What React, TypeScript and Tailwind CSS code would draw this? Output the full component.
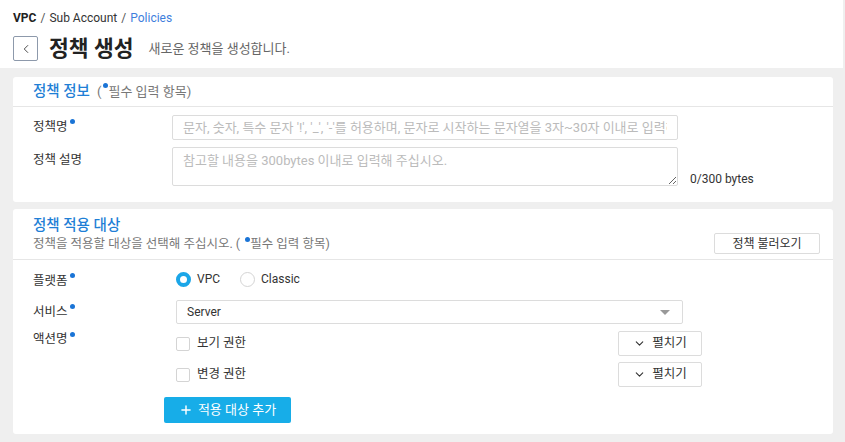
import { ChevronLeft, ChevronDown, Plus } from "lucide-react";

const font = { fontFamily: "Roboto, 'Noto Sans CJK KR', sans-serif" };

function Dot() {
  return <span className="inline-block w-[5px] h-[5px] rounded-full bg-[#1a74d6] align-top ml-[2px] mt-[1px]" />;
}

function Radio({ checked, label }: { checked?: boolean; label: string }) {
  return (
    <label className="flex items-center gap-[6px] text-[12px] text-[#333]">
      {checked ? (
        <span className="w-[15px] h-[15px] rounded-full border-[4px] border-[#1ba6e8] bg-white" />
      ) : (
        <span className="w-[15px] h-[15px] rounded-full border border-[#d4d4d4] bg-white" />
      )}
      {label}
    </label>
  );
}

function ActionRow({ label }: { label: string }) {
  return (
    <div className="flex items-center justify-between w-[526px] h-[25px]">
      <label className="flex items-center gap-[7px] text-[12.5px] text-[#333]">
        <span className="w-[14px] h-[14px] border border-[#d4d4d4] rounded-[2px] bg-white" />
        {label}
      </label>
      <button className="w-[84px] h-[25px] border border-[#dcdcdc] rounded-[2px] bg-white flex items-center justify-center gap-[6px] text-[12.5px] text-[#333]">
        <ChevronDown size={13} strokeWidth={2} className="text-[#333]" />
        펼치기
      </button>
    </div>
  );
}

export default function App() {
  return (
    <div className="w-[845px] h-[442px] bg-[#efefef] overflow-hidden" style={font}>
      {/* Header */}
      <div className="bg-white mr-[2px] px-[13px] pt-[10px] pb-[7px]">
        <div className="flex items-center text-[12px] leading-[16px] text-[#333]">
          <span className="font-bold text-[#222]">VPC</span>
          <span className="mx-[4px] text-[#555]">/</span>
          <span>Sub Account</span>
          <span className="mx-[4px] text-[#555]">/</span>
          <span className="text-[#3f7fdd]">Policies</span>
        </div>
        <div className="flex items-center mt-[10px] h-[25px]">
          <button className="w-[25px] h-[25px] border border-[#8d99ab] rounded-[2px] flex items-center justify-center">
            <ChevronLeft size={14} strokeWidth={1.5} className="text-[#333]" />
          </button>
          <h1 className="ml-[11px] text-[21.5px] font-bold text-[#222] leading-[25px]">정책 생성</h1>
          <span className="ml-[15px] text-[13px] text-[#666]">새로운 정책을 생성합니다.</span>
        </div>
      </div>

      {/* Card 1 */}
      <div className="ml-[13px] w-[820px] mt-[9px] bg-white rounded-[3px]">
        <div className="h-[30px] flex items-center px-5 border-b border-[#e6e6e6]">
          <span className="text-[14.5px] font-medium text-[#1f7fd6]">정책 정보</span>
          <span className="ml-[7px] text-[13px] text-[#777]">
            (<Dot />필수 입력 항목)
          </span>
        </div>
        <div className="px-5 pt-2 pb-4 flex flex-col gap-[7px]">
          <div className="flex items-center">
            <div className="w-[139px] text-[12.5px] text-[#333]">
              정책명<Dot />
            </div>
            <input
              className="w-[506px] h-[25px] border border-[#dcdcdc] rounded-[2px] px-[10px] text-[13px] placeholder:text-[#bbb] outline-none"
              placeholder="문자, 숫자, 특수 문자 '!', '_', '-'를 허용하며, 문자로 시작하는 문자열을 3자~30자 이내로 입력해 주십시오."
            />
          </div>
          <div className="flex items-start">
            <div className="w-[139px] pt-[5px] text-[12.5px] leading-[16px] text-[#333]">정책 설명</div>
            <textarea
              className="w-[506px] h-[39px] border border-[#dcdcdc] rounded-[2px] px-[10px] py-[4px] text-[13px] leading-[18px] placeholder:text-[#bbb] outline-none"
              placeholder="참고할 내용을 300bytes 이내로 입력해 주십시오."
            />
            <span className="self-end ml-[12px] text-[12px] leading-[16px] text-[#333] mb-[-1px]">0/300 bytes</span>
          </div>
        </div>
      </div>

      {/* Card 2 */}
      <div className="ml-[13px] w-[820px] mt-[7px] bg-white rounded-[3px]">
        <div className="flex items-end justify-between pl-5 pr-[13px] pt-[8px] pb-[5px] border-b border-[#e6e6e6]">
          <div className="pb-[2px]">
            <div className="text-[14.5px] font-medium leading-[18px] text-[#1f7fd6]">정책 적용 대상</div>
            <div className="mt-[1px] text-[12.5px] leading-[16px] text-[#777]">
              정책을 적용할 대상을 선택해 주십시오. ( <Dot />필수 입력 항목)
            </div>
          </div>
          <button className="w-[106px] h-[21px] border border-[#dcdcdc] rounded-[2px] text-[12px] text-[#333] bg-white">
            정책 불러오기
          </button>
        </div>
        <div className="px-5 pt-[9px] pb-[11px]">
          <div className="flex items-center h-[20px]">
            <div className="w-[143px] text-[12.5px] text-[#333] pt-[5px]">
              플랫폼<Dot />
            </div>
            <div className="flex items-center gap-[20px]">
              <Radio checked label="VPC" />
              <Radio label="Classic" />
            </div>
          </div>
          <div className="flex items-center mt-[11px]">
            <div className="w-[143px] text-[12.5px] text-[#333] pt-[1px]">
              서비스<Dot />
            </div>
            <div className="w-[507px] h-[24px] border border-[#dcdcdc] rounded-[2px] flex items-center justify-between pl-[10px] pr-[12px] text-[12px] text-[#333]">
              Server
              <span className="w-0 h-0 border-l-[5px] border-r-[5px] border-t-[5px] border-l-transparent border-r-transparent border-t-[#999]" />
            </div>
          </div>
          <div className="flex items-start mt-[7px]">
            <div className="w-[143px] text-[12.5px] leading-[16px] text-[#333]">
              액션명<Dot />
            </div>
            <div className="flex flex-col gap-[6px]">
              <ActionRow label="보기 권한" />
              <ActionRow label="변경 권한" />
            </div>
          </div>
          <button className="ml-[131px] mt-[10px] w-[127px] h-[26px] bg-[#17ade8] rounded-[2px] flex items-center justify-center gap-[5px] text-white text-[13px]">
            <Plus size={14} strokeWidth={2.5} />
            적용 대상 추가
          </button>
        </div>
      </div>
    </div>
  );
}
